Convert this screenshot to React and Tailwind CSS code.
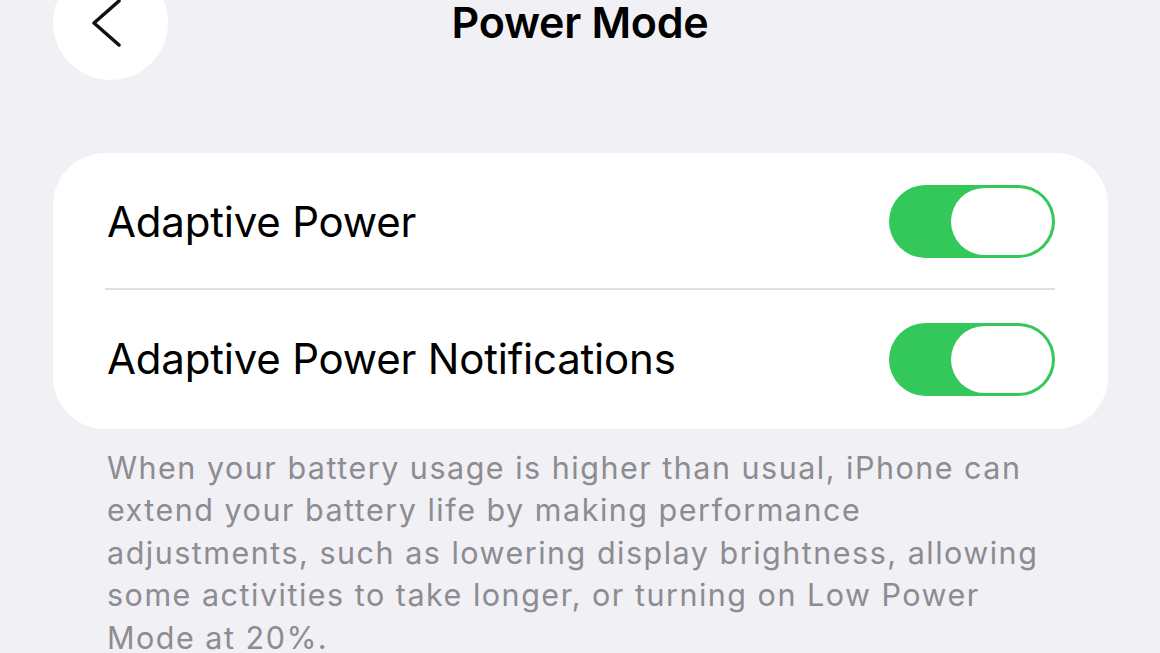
import React from "react";

function Toggle() {
  return (
    <div className="flex h-[73px] w-[166px] items-center justify-end rounded-full bg-[#34c759] p-[3px]">
      <div className="h-[67px] w-[101px] rounded-full bg-white" />
    </div>
  );
}

export default function App() {
  return (
    <div
      className="relative h-[653px] w-[1160px] overflow-hidden bg-[#f0f0f5] text-black"
      style={{ fontFamily: "Inter, 'Liberation Sans', sans-serif" }}
    >
      <header className="relative flex h-[60px] items-start justify-center">
        <div className="absolute left-[53px] top-[-35px] h-[115px] w-[115px] rounded-full bg-white">
          <svg width="115" height="115" viewBox="0 0 115 115" className="absolute left-0 top-0">
            <path d="M66 36 L41 58 L66 80" fill="none" stroke="#111" strokeWidth="3.5" strokeLinecap="round" strokeLinejoin="round" />
          </svg>
        </div>
        <h1 className="mt-[-4px] text-[43px] font-semibold leading-[52px] tracking-[-0.3px]">Power Mode</h1>
      </header>

      <div className="ml-[53px] mr-[52px] mt-[93px] rounded-[52px] bg-white">
        <div className="flex h-[135px] items-center justify-between pl-[54px] pr-[53px] pt-[2px]">
          <span className="text-[42px] leading-none tracking-[-0.2px]">Adaptive Power</span>
          <Toggle />
        </div>
        <div className="ml-[52px] mr-[53px] h-[1.5px] bg-[#e0e0e4]" />
        <div className="flex h-[139px] items-center justify-between pl-[54px] pr-[53px]">
          <span className="text-[42px] leading-none tracking-[-0.2px]">Adaptive Power Notifications</span>
          <Toggle />
        </div>
      </div>

      <p className="ml-[107px] mt-[18px] text-[30.5px] leading-[42.5px] tracking-[1.5px] text-[#8c8c91]">
        <span className="block">When your battery usage is higher than usual, iPhone can</span>
        <span className="block">extend your battery life by making performance</span>
        <span className="block">adjustments, such as lowering display brightness, allowing</span>
        <span className="block">some activities to take longer, or turning on Low Power</span>
        <span className="block">Mode at 20%.</span>
      </p>
    </div>
  );
}
